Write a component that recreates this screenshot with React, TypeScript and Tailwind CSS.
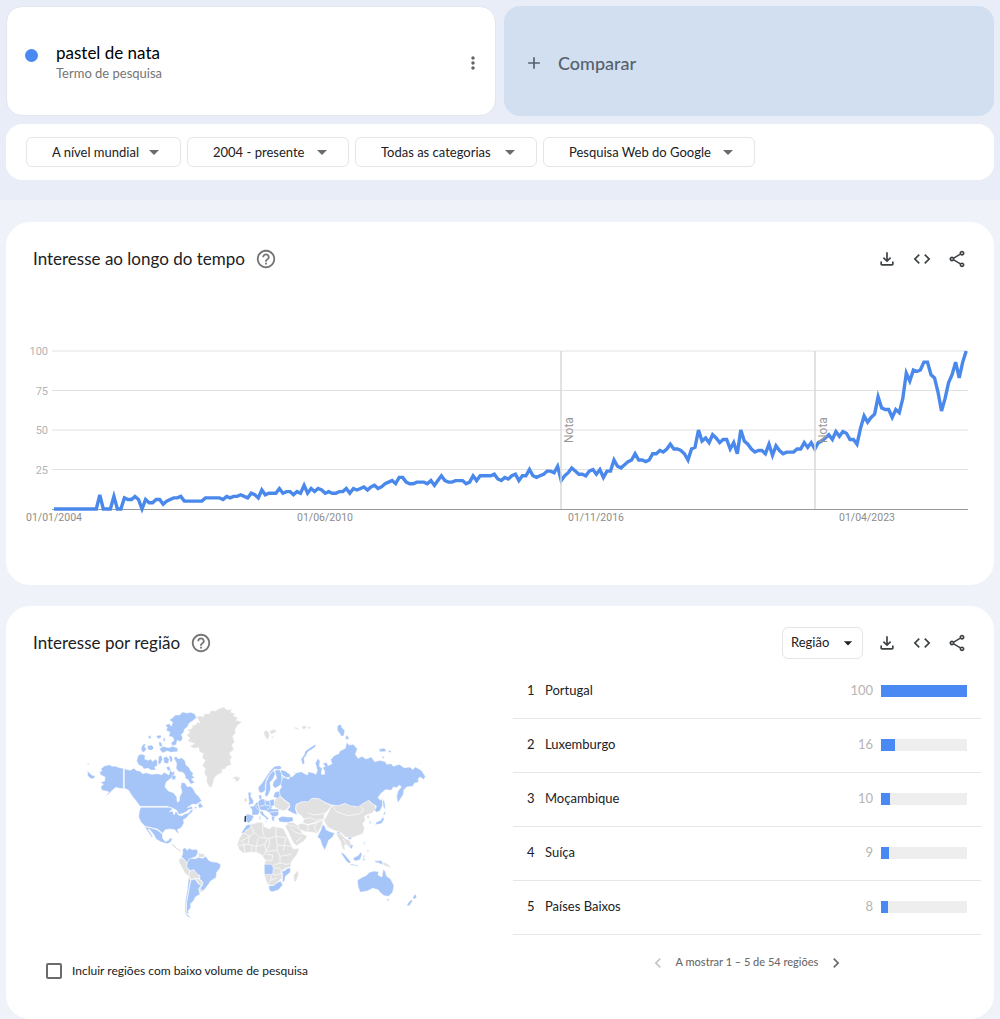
import { useState } from "react";
import {
  MdAdd,
  MdArrowDropDown,
  MdChevronLeft,
  MdChevronRight,
  MdCode,
  MdHelpOutline,
  MdMoreVert,
  MdOutlineFileDownload,
  MdOutlineShare,
} from "react-icons/md";

const filters = [
  { id: "geo", label: "Localização", value: "A nível mundial", width: "w-[155px]" },
  { id: "time", label: "Período", value: "2004 - presente", width: "w-[162px]" },
  { id: "category", label: "Categoria", value: "Todas as categorias", width: "w-[182px]" },
  { id: "source", label: "Fonte", value: "Pesquisa Web do Google", width: "w-[212px]" },
];

const regions = [
  { name: "Portugal", value: 100 },
  { name: "Luxemburgo", value: 16 },
  { name: "Moçambique", value: 10 },
  { name: "Suíça", value: 9 },
  { name: "Países Baixos", value: 8 },
];

// one value per month, starting in January 2004
const interest = [
  0, 0, 0, 0, 0, 0, 0, 0, 0, 0, 0, 0, 0, 9, 0, 0, 0, 8, 0, 0, 7, 6, 6, 8, 6, 0,
  6, 4, 4, 6, 6, 3, 5, 6, 7, 7, 8, 5, 5, 5, 5, 5, 5, 7, 7, 7, 7, 7, 6, 8, 7, 8,
  8, 9, 8, 7, 10, 9, 7, 12, 9, 10, 10, 10, 13, 10, 11, 11, 9, 11, 10, 15, 10,
  13, 11, 13, 12, 10, 11, 10, 10, 11, 11, 13, 10, 13, 12, 13, 14, 12, 14, 15,
  13, 14, 16, 17, 18, 16, 20, 20, 17, 16, 16, 17, 17, 17, 16, 18, 15, 18, 21,
  18, 17, 17, 18, 18, 18, 16, 17, 21, 18, 21, 21, 21, 21, 22, 19, 18, 20, 19,
  21, 22, 18, 21, 21, 25, 21, 20, 21, 22, 24, 24, 23, 27, 18, 21, 23, 26, 24,
  22, 22, 21, 24, 25, 22, 25, 20, 24, 24, 31, 27, 26, 28, 30, 31, 35, 31, 31,
  30, 31, 35, 35, 37, 36, 38, 41, 38, 38, 37, 35, 31, 38, 39, 50, 43, 45, 42,
  47, 45, 42, 44, 44, 38, 42, 35, 50, 43, 41, 38, 36, 37, 37, 35, 41, 34, 40,
  37, 35, 36, 36, 36, 38, 38, 42, 39, 42, 38, 42, 43, 45, 47, 44, 49, 46, 49,
  48, 44, 44, 41, 51, 59, 55, 58, 60, 71, 64, 63, 63, 58, 63, 61, 70, 86, 81,
  88, 87, 88, 93, 93, 85, 83, 74, 62, 70, 80, 85, 93, 83, 93, 100,
];

const xTicks = [
  { x: 28, label: "01/01/2004" },
  { x: 299, label: "01/06/2010" },
  { x: 570, label: "01/11/2016" },
  { x: 841, label: "01/04/2023" },
];

const yPos = (value: number) => 171 - value * 1.58;

const InterestChart = () => {
  const points = interest
    .map((value, i) => `${(28 + i * 3.522).toFixed(1)},${yPos(value).toFixed(1)}`)
    .join(" ");
  return (
    <svg viewBox="0 0 948 190" className="block w-full font-[Roboto,sans-serif]" role="img" aria-label="Interesse ao longo do tempo">
      {[100, 75, 50, 25].map((value) => (
        <g key={value}>
          <line x1="26" x2="942" y1={yPos(value)} y2={yPos(value)} stroke="#e2e2e2" />
          <text x="22" y={yPos(value) + 4} textAnchor="end" fontSize="11" fill="#b3b3b3">
            {value}
          </text>
        </g>
      ))}
      <line x1="26" x2="942" y1="171.5" y2="171.5" stroke="#9a9a9a" />
      <polyline points={points} fill="none" stroke="#4a89eb" strokeWidth="3.4" />
      {[535, 789].map((x) => (
        <g key={x}>
          <line x1={x} x2={x} y1="13" y2="171" stroke="#d9d9d9" strokeWidth="1.5" />
          <text transform={`translate(${x + 12} 105) rotate(-90)`} fontSize="12" fill="#999999">
            Nota
          </text>
        </g>
      ))}
      {xTicks.map((tick) => (
        <text key={tick.label} x={tick.x} y="183" textAnchor="middle" fontSize="10.5" fill="#8c8c8c">
          {tick.label}
        </text>
      ))}
    </svg>
  );
};

const americasBlue = [
  // Alaska and the tip of Chukotka
  "M92 222L103 213 118 209 126 214 135 213 148 218 160 220 160 280 170 284 182 295 198 318 190 310 175 289 165 282 148 280 138 277 128 285 115 298 106 302 117 291 108 288 96 286 92 276 100 268 91 262 104 258 105 246 92 240 88 230 96 228z",
  "M52 228L60 235 66 241 76 242 70 252 60 250 53 242zM52 206l5 0 1 4-5-1z",
  // Canada
  "M163 221L180 226 192 220 200 227 210 228 218 236 228 233 245 238 262 236 275 239 283 232 290 236 297 240 300 222 306 232 314 228 312 245 300 252 288 262 285 275 295 288 310 293 320 305 322 322 328 318 329 305 336 292 332 275 335 262 345 264 352 275 362 274 370 282 376 294 388 306 395 318 380 328 366 328 352 338 366 334 368 342 356 344 346 352 336 356 326 358 320 346 305 338 290 334 210 334 200 320 185 300 175 285 163 280z",
  "M312 190L318 183 325 192 335 188 345 197 348 210 358 218 362 228 370 234 367 242 374 248 364 252 374 262 362 268 354 254 346 250 345 240 338 232 326 230 318 220 320 205z",
  "M205 180L216 177 226 182 224 192 234 196 243 192 248 200 256 192 262 198 262 212 254 216 258 224 245 226 234 220 222 222 216 214 206 210 200 198z",
  "M298 75L308 68 316 60 328 60 338 51 352 54 362 52 375 57 379 68 368 78 358 84 352 96 344 102 340 114 334 118 338 130 332 140 322 136 318 150 306 152 303 144 312 136 308 126 296 124 300 112 288 106 292 98 286 90 298 86 304 94 308 82z",
  "M213 160l6-12 8-2-3 10 6 6-8 10-6-2zM232 152l14-2 6 10-8 6-10-2zM234 124l6-3 4 8-6 3zM258 122l14-2 2 8-10 4zM266 140l8 2 4 14-10-2zM268 162l10-8 18 4 12-4 16 6-2 10-20 2-10-4-14 6zM266 184l8-3 4 12-8 16-6-6zM280 188l10-4 8 10-4 12-12-2zM296 182l10 2 2 12-6 8zM288 216l10-2 4 10-8 4zM306 240l12 2-2 12-10 0zM280 128l6 2-2 10-5-3z",
  "M384 332l6-10 10 14-12 4zM374 334l8 4-8 4z",
  // United States
  "M212 337L300 337 308 342 298 350 308 348 312 360 318 348 325 360 336 362 346 356 356 354 362 346 370 342 366 352 356 360 350 368 340 374 342 384 334 398 322 404 327 416 322 414 314 404 300 402 286 404 278 415 270 408 262 402 245 398 225 394 212 380 206 365 208 348z",
  // Mexico
  "M224 395L245 400 262 405 277 417 278 430 286 440 296 436 298 430 308 430 302 442 292 446 275 442 258 432 252 420 240 404 234 402 240 412 248 424 246 428 234 410z",
  // Colombia and Venezuela
  "M338 462L346 458 351 466 358 460 368 464 380 462 384 472 378 485 366 489 356 494 352 504 342 492 334 486 338 476z",
  // Brazil
  "M352 502L360 490 376 491 385 487 398 490 408 484 414 494 424 500 440 502 452 508 450 520 440 532 438 548 422 558 414 570 400 588 390 580 398 570 398 560 389 552 390 542 378 534 372 524 360 527 350 515z",
  // Argentina and Chile
  "M362 556L375 552 385 567 394 570 386 582 390 598 376 606 372 616 362 626 362 638 354 648 358 656 349 654 350 620 356 590z",
  "M356 545L361 556 355 590 349 622 348 654 366 671 352 664 345 654 346 618 352 585z",
];

const americasGrey = [
  // Greenland
  "M350 120L360 112 352 104 367 100 366 92 380 88 380 80 390 84 384 72 376 68 390 62 400 66 402 56 418 56 424 46 436 48 448 40 462 36 470 44 486 42 482 52 496 56 490 62 504 68 498 76 517 80 504 90 496 102 496 116 488 124 494 140 486 150 492 164 478 175 486 186 480 194 484 210 470 214 466 222 456 224 456 234 442 240 434 248 430 260 426 277 418 276 410 262 410 245 403 236 405 220 397 212 406 196 396 188 400 176 388 170 386 158 372 160 358 154 374 146 352 138 360 130z",
  "M486 250L498 244 511 248 506 258 494 262 498 254z",
  // Central America and the Andes
  "M300 446L312 448 320 458 334 466 332 470 318 462 308 452zM384 474L404 478 404 487 386 487z",
  "M330 488L342 492 352 504 350 515 359 528 357 545 345 535 332 510 326 500z",
  "M359 528L372 524 380 535 390 544 388 550 375 550 363 555 357 542z",
  "M376 550L388 552 398 562 396 572 385 565zM388 578L400 586 396 592 387 588z",
];

const eurasiaBlue = [
  // Russia
  "M150 302L147 288 155 275 148 264 158 250 152 240 164 248 178 252 172 238 186 246 198 234 214 230 224 236 232 240 236 230 250 234 258 238 262 226 256 204 264 190 270 198 268 214 276 220 274 238 284 238 284 228 278 218 286 214 278 206 290 202 294 212 306 206 302 194 312 182 326 176 330 168 346 160 350 142 358 150 370 148 382 162 376 178 384 190 396 184 408 192 424 186 434 200 450 196 466 200 470 208 484 206 490 214 508 208 522 218 540 216 548 224 556 216 574 226 586 244 582 254 570 246 564 252 566 262 554 264 548 274 530 276 522 284 520 298 510 314 503 324 500 304 504 288 514 276 508 270 500 278 490 276 484 286 466 284 452 296 444 308 452 316 456 310 458 330 450 348 438 352 434 346 440 334 428 326 416 316 400 325 385 335 360 332 345 325 325 332 305 330 285 322 265 310 245 310 235 320 215 320 198 328 196 342 202 360 188 354 172 345 180 335 178 325 165 316z",
  "M217 208L213 192 222 180 226 168 240 158 256 148 258 154 244 164 234 170 228 182 222 190 224 206z",
  "M322 92l10-4 4 10 8 8-2 16-8 2-6-10-6-8zM348 120l8 6 0 8-10-2zM447 162l14-2 8 4-4 6-16 0zM474 168l8-2 2 6-8 0zM456 184l8 2-2 4-6-2zM568 204l4 2-4 2zM190 232l4-2-1 8zM458 312l6 8 2 24-6-8z",
  "M152 224l14 4 14 10 2 8-14 2-14-10z",
  // Nordics
  "M88 292L84 278 96 264 108 246 120 228 134 214 150 212 156 220 146 224 134 222 122 234 110 252 106 268 106 286 96 294z",
  "M104 300L107 288 108 262 118 240 130 226 136 236 128 254 120 262 122 282 116 298 110 306z",
  "M134 226L148 224 154 234 156 252 152 270 136 280 128 272 130 260 140 250z",
  // British Isles and central Europe
  "M54 292l10 0-2 12 8 12 0 10-16 4 4-10-2-8zM74 328l6-6 6 2-2 10-8 0zM86 300l8 0 2 10-8 4z",
  "M58 334L70 334 76 328 86 334 90 348 84 360 66 360 66 344z",
  "M50 356L72 362 66 376 56 384 49 380z",
  "M84 320L92 312 104 312 110 318 132 312 134 330 126 334 128 342 146 342 146 356 142 364 128 366 116 352 104 346 92 346 86 334z",
  "M88 350L98 348 102 358 116 370 112 376 104 366 94 360zM104 378l8 0-2 4zM88 364l4 0 0 10-4 0zM124 364l12 0-4 8 2 8-8-4zM134 292l14-4 2 14-6 8-14-4z",
  "M144 370L156 364 174 366 188 366 190 378 176 382 160 382 148 380z",
  "M34 414L44 398 50 390 62 388 60 398 48 406 42 414z",
  // India, east and south-east Asia
  "M278 388L286 396 288 404 300 410 314 414 308 426 296 436 290 452 284 466 276 450 270 432 262 426 272 406z",
  "M462 350l6 4-8 8zM460 364l2 10-8 12-14 2-4 6 2-12 14-6zM418 374l6 10-4 4zM334 472l10 6 18 22-2 6-10-6-16-24zM370 488l14-6 8-10 4 6-6 16-12 4-8-4zM360 506l22 4 6 4-26-4zM400 482l6-2-4 8 4 8-6 2zM434 496l10 2 10-2 6 14-14-6-10-2zM354 428l8-2 4 4-8 4zM362 448l8 4-6 10-4-2zM322 410l6-2 2 8-6 0zM402 440l4 2-2 8zM412 464l5 3-4 6z",
  // Oceania
  "M382 556L398 546 408 542 418 532 432 528 446 530 444 540 456 546 460 522 466 530 470 544 482 552 492 572 488 592 476 604 462 602 452 594 444 584 428 580 412 588 390 592 384 574zM470 612l8 0-4 8zM554 598l6 4-2 8-6 2-4-4zM544 614l4 4-10 14-8 0 4-8z",
  // Southern Africa
  "M103 508L124 508 130 518 128 538 103 538z",
  "M181 518L181 532 166 544 164 558 157 562 158 536 154 530 166 526 168 522z",
  "M116 572L130 572 140 564 152 558 158 570 146 584 126 591 118 586z",
];

const eurasiaGrey = [
  "M42 312l8-4 2 10-8 4zM100 110l10-4 8 8 0 10-6 12-8-14zM118 108l16-6 6 8-16 8zM124 124l8 2-6 6zM192 96l12 2 4 6-12-2zM214 94l14-2 2 6-10 6zM234 94l12 4-12 4z",
  // Ukraine and Belarus
  "M135 312L150 304 165 318 180 328 176 338 162 348 148 344 132 334z",
  // Africa
  "M62 388L85 382 100 382 102 395 120 402 126 394 160 400 172 425 185 452 190 462 208 460 200 480 184 500 182 516 166 520 154 530 156 548 140 564 128 572 112 568 106 550 103 540 103 508 106 496 95 480 80 472 60 472 40 474 28 465 22 450 28 430 40 412 50 406z",
  "M203 526l3 12-8 22-7-2 0-18z",
  // Middle East and central Asia
  "M165 392L175 386 198 394 212 406 218 416 232 424 222 438 200 452 190 444 178 418z",
  "M172 382L190 382 200 390 215 385 235 390 255 385 280 375 274 395 262 416 250 412 226 410 206 402 190 392 172 390z",
  "M198 345L198 328 215 320 235 320 245 310 265 310 285 322 305 332 295 345 282 360 282 375 262 380 235 388 218 384 222 372 212 360 204 356z",
  // Mongolia and China
  "M305 332L325 332 345 325 375 335 400 325 404 316 414 315 435 332 438 342 424 356 414 358 404 364 406 376 398 386 404 400 398 416 378 424 362 430 345 425 334 414 312 406 292 396 282 376 290 362z",
  "M318 412L332 416 345 430 358 436 366 452 358 460 352 450 343 450 346 466 338 462 332 440 324 428zM410 362l8-2 0 10-6 2zM400 440l6 4-4 12zM458 500l14 6 12 12-10-2-14-6z",
];

// country borders over the grey land
const borders =
  "M62 392L72 412 60 424 30 440M72 412L92 428 118 430 138 424 168 428M98 384L98 410 104 428M138 398L138 424 142 450 184 454M42 414L58 424 54 448 26 452M84 430L78 456 78 472M54 448L80 454 104 448 112 430M104 448L108 470 100 482M118 430L118 450 108 470 142 466 142 450M142 466L150 484 184 478M108 496L126 496 128 480 110 478M150 484L150 504 130 510M150 504L168 508 180 506M130 518L150 520 154 530M128 538L140 540 154 534M112 568L122 556 124 540M122 556L140 548M168 428L160 466M40 440L44 472M66 450L64 472M182 398L196 412 218 418M204 388L206 402M234 390L234 410M262 382L252 398 262 414M222 372L240 368 258 376 282 372M232 352L250 360 270 358 290 352M305 332L320 350 352 362 384 358 402 346 392 334M340 432L350 450M198 440L216 426";

const WorldMap = () => (
  <svg viewBox="0 0 1110 690" className="block w-full" role="img" aria-label="Interesse por região">
    <g stroke="#ffffff" strokeWidth="1.5" strokeLinejoin="round">
      {americasGrey.map((d) => (
        <path key={d} d={d} fill="#e1e1e1" />
      ))}
      {americasBlue.map((d) => (
        <path key={d} d={d} fill="#a5c4f8" />
      ))}
      <g transform="translate(480 0)">
        {eurasiaGrey.map((d) => (
          <path key={d} d={d} fill="#e1e1e1" />
        ))}
        <path d={borders} fill="none" strokeWidth="2" />
        {eurasiaBlue.map((d) => (
          <path key={d} d={d} fill="#a5c4f8" />
        ))}
        <path d="M44 363L49 362 48 380 43 380z" fill="#123c7c" stroke="none" />
        <path d="M90 334L104 330 126 334M104 312L106 330M110 346L118 338 130 342M116 352L132 350 146 350M76 334L86 346M118 312L120 330" fill="none" strokeWidth="2" />
      </g>
    </g>
  </svg>
);

const PanelActions = () => (
  <div className="flex items-center gap-[15px] text-[#3c4043]">
    <button type="button" aria-label="Transferir">
      <MdOutlineFileDownload size={20} />
    </button>
    <button type="button" aria-label="Incorporar">
      <MdCode size={20} />
    </button>
    <button type="button" aria-label="Partilhar">
      <MdOutlineShare size={20} />
    </button>
  </div>
);

const PanelTitle = ({ title }: { title: string }) => (
  <div className="flex items-center gap-2.5">
    <h2 className="text-[17px] text-[#202124]">{title}</h2>
    <button type="button" aria-label="Ajuda" className="text-[#757575]">
      <MdHelpOutline size={22} />
    </button>
  </div>
);

const App = () => {
  const [lowVolume, setLowVolume] = useState(false);
  return (
    <div className="min-h-screen bg-[#eff3f9] font-['Google_Sans',Lato,sans-serif] text-[#202124]">
      <header className="bg-[#e9edf8] px-1.5 pt-1.5 pb-5">
        <div className="grid grid-cols-2 gap-2">
          <div className="flex min-h-[110px] items-center rounded-2xl border border-[#e4e6ee] bg-white pt-1 pr-3 pl-[18px]">
            <span className="mb-4 size-[13px] rounded-full bg-[#4a89f3]" />
            <div className="ml-[18px] flex-1">
              <h1 className="text-[17px] leading-5 text-black">pastel de nata</h1>
              <p className="text-[13px] leading-5 text-[#757575]">Termo de pesquisa</p>
            </div>
            <button type="button" aria-label="Mais opções" className="text-[#5f6368]">
              <MdMoreVert size={20} />
            </button>
          </div>
          <button
            type="button"
            className="flex min-h-[110px] items-center gap-3.5 rounded-2xl bg-[#d1dff0] pt-1 pl-5 text-[18px] font-medium text-[#56616d]"
          >
            <MdAdd size={20} />
            Comparar
          </button>
        </div>
        <div className="mt-2 flex flex-wrap items-center gap-1.5 rounded-2xl bg-white px-5 py-[13px]">
          {filters.map((filter) => (
            <label
              key={filter.id}
              className={`flex h-[30px] items-center rounded-md border border-[#e3e5e8] pr-3.5 pl-[25px] ${filter.width}`}
            >
              <select aria-label={filter.label} className="min-w-0 flex-1 appearance-none bg-transparent pt-0.5 text-[13px] outline-none">
                <option>{filter.value}</option>
              </select>
              <MdArrowDropDown size={24} className="shrink-0 text-[#6b6b6b]" />
            </label>
          ))}
        </div>
      </header>

      <main className="flex flex-col gap-[21px] px-1.5 pt-[22px]">
        <section className="rounded-3xl bg-white pb-[57px]">
          <div className="flex items-center justify-between px-[27px] pt-[21px]">
            <div className="flex h-8 items-center">
              <PanelTitle title="Interesse ao longo do tempo" />
            </div>
            <PanelActions />
          </div>
          <div className="px-5 pt-[63px]">
            <InterestChart />
          </div>
        </section>

        <section className="rounded-3xl bg-white pb-[39px]">
          <div className="flex items-center justify-between px-[27px] pt-[21px]">
            <PanelTitle title="Interesse por região" />
            <div className="flex items-center gap-3.5">
              <label className="flex h-8 w-[81px] items-center rounded-md border border-[#e3e5e8] pr-1 pl-2">
                <select aria-label="Resolução" className="min-w-0 flex-1 appearance-none bg-transparent text-[13px] outline-none">
                  <option>Região</option>
                </select>
                <MdArrowDropDown size={20} className="shrink-0" />
              </label>
              <PanelActions />
            </div>
          </div>
          <div className="grid grid-cols-2">
            <div>
              <div className="pt-9 pr-[60px] pl-16">
                <WorldMap />
              </div>
              <label className="mt-[37px] ml-10 flex items-center gap-2.5 text-[12px]">
                <input
                  type="checkbox"
                  checked={lowVolume}
                  onChange={(e) => setLowVolume(e.target.checked)}
                  className="size-4 appearance-none rounded-xs border-2 border-[#6b6b6b] checked:bg-[#4a89f3]"
                />
                Incluir regiões com baixo volume de pesquisa
              </label>
            </div>
            <div className="px-[13px] pt-[5px]">
              <table className="w-full text-[13px]">
                <tbody>
                  {regions.map((region, i) => (
                    <tr key={region.name} className="h-[54px] border-b border-[#e6e6e6]">
                      <td className="w-8 pl-3.5">{i + 1}</td>
                      <td>{region.name}</td>
                      <td className="pr-2 text-right text-[#b5b5b5]">{region.value}</td>
                      <td className="w-[100px] pr-3.5">
                        <div className="h-3 bg-[#eeeeee]">
                          <div
                            className="h-3 bg-[#4a89f3]"
                            style={{ width: `${region.value}%` }}
                          />
                        </div>
                      </td>
                    </tr>
                  ))}
                </tbody>
              </table>
              <div className="mt-[18px] flex items-center justify-center gap-2 text-[11px] font-medium text-[#6b6b6b]">
                <button type="button" aria-label="Anterior" disabled className="text-[#c4c4c4]">
                  <MdChevronLeft size={20} />
                </button>
                <span>A mostrar 1 – 5 de 54 regiões</span>
                <button type="button" aria-label="Seguinte">
                  <MdChevronRight size={20} />
                </button>
              </div>
            </div>
          </div>
        </section>
      </main>
    </div>
  );
};

export default App;
